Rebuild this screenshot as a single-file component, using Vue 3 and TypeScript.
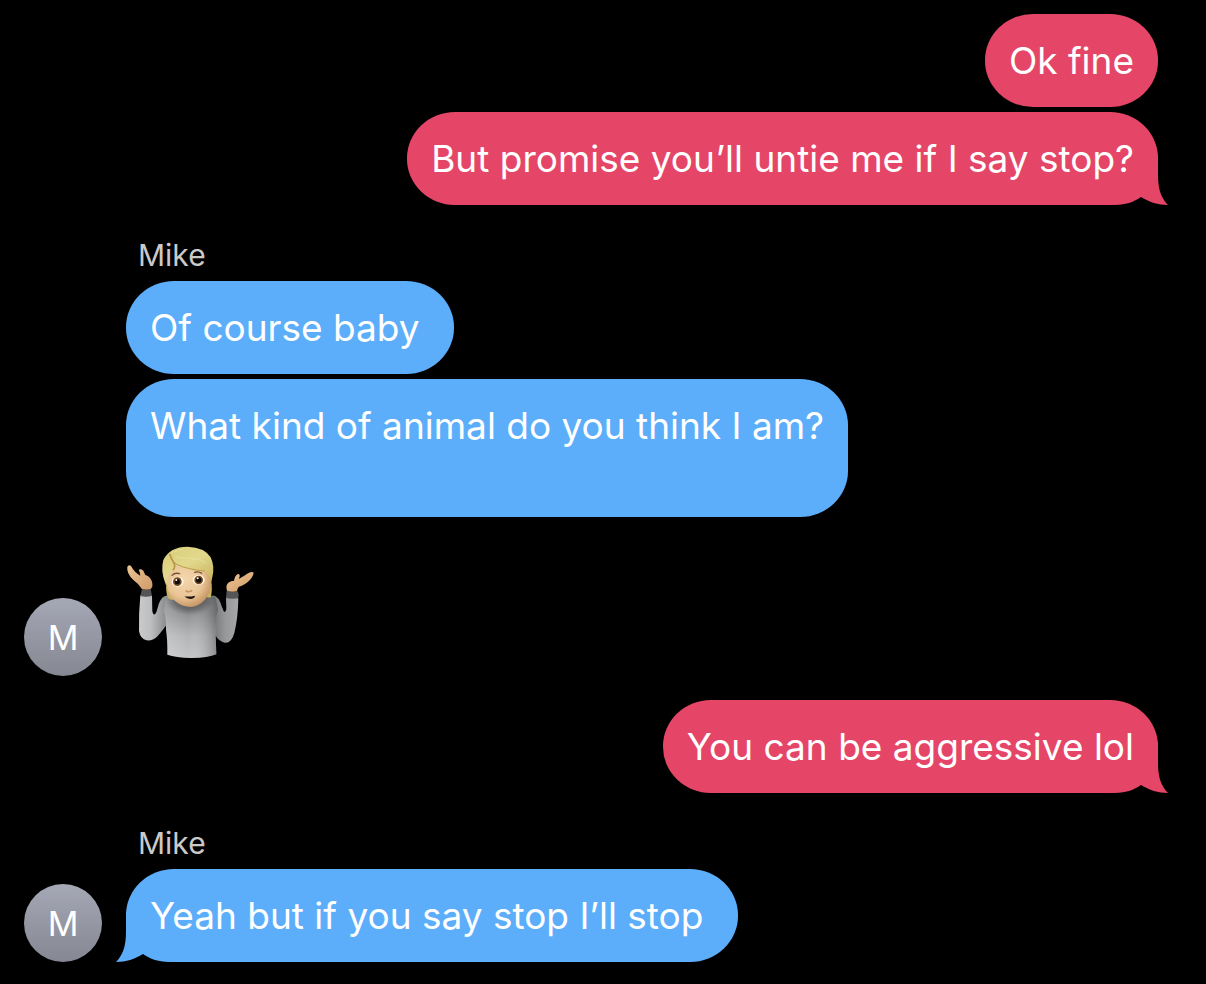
<script setup lang="ts">
interface Message {
  text?: string
  emoji?: boolean
  tail?: boolean
}

interface Group {
  sender: 'me' | 'Mike'
  messages: Message[]
}

const groups: Group[] = [
  {
    sender: 'me',
    messages: [{ text: 'Ok fine' }, { text: 'But promise you’ll untie me if I say stop?', tail: true }],
  },
  {
    sender: 'Mike',
    messages: [
      { text: 'Of course baby ' },
      { text: 'What kind of animal do you think I am?\n\n' },
      { emoji: true },
    ],
  },
  { sender: 'me', messages: [{ text: 'You can be aggressive lol', tail: true }] },
  { sender: 'Mike', messages: [{ text: 'Yeah but if you say stop I’ll stop ', tail: true }] },
]
</script>

<template>
  <main class="thread">
    <section
      v-for="(group, g) in groups"
      :key="g"
      class="group"
      :class="group.sender === 'me' ? 'sent' : 'received'"
    >
      <div v-if="group.sender !== 'me'" class="avatar" aria-hidden="true">M</div>
      <div class="stack">
        <h2 v-if="group.sender !== 'me'" class="name">{{ group.sender }}</h2>
        <template v-for="(message, m) in group.messages" :key="m">
          <svg
            v-if="message.emoji"
            class="shrug"
            viewBox="30 30 384 339"
            role="img"
            aria-label="Person shrugging"
          >
            <defs>
              <linearGradient id="torso" x1="0" y1="0" x2="0" y2="1">
                <stop offset="0" stop-color="#77787a" />
                <stop offset="0.3" stop-color="#8f9092" />
                <stop offset="0.65" stop-color="#b4b5b7" />
                <stop offset="1" stop-color="#c3c4c6" />
              </linearGradient>
              <linearGradient id="torsoShade" x1="0" y1="0" x2="1" y2="0">
                <stop offset="0" stop-color="#ffffff" stop-opacity="0.22" />
                <stop offset="0.45" stop-color="#ffffff" stop-opacity="0" />
                <stop offset="1" stop-color="#303032" stop-opacity="0.42" />
              </linearGradient>
              <linearGradient id="leftSleeve" x1="0" y1="0" x2="1" y2="0">
                <stop offset="0" stop-color="#c9cacc" />
                <stop offset="0.4" stop-color="#bdbec0" />
                <stop offset="1" stop-color="#828385" />
              </linearGradient>
              <linearGradient id="rightSleeve" x1="0" y1="0" x2="1" y2="0">
                <stop offset="0" stop-color="#6c6d6f" />
                <stop offset="0.55" stop-color="#97989a" />
                <stop offset="1" stop-color="#a7a8aa" />
              </linearGradient>
              <radialGradient id="skin" cx="0.42" cy="0.4" r="0.66">
                <stop offset="0" stop-color="#f3d6ac" />
                <stop offset="0.6" stop-color="#eac596" />
                <stop offset="1" stop-color="#c08c5a" />
              </radialGradient>
              <linearGradient id="hand" x1="0" y1="0" x2="1" y2="1">
                <stop offset="0" stop-color="#edc696" />
                <stop offset="1" stop-color="#d09a67" />
              </linearGradient>
              <linearGradient id="hair" x1="0" y1="0" x2="0.8" y2="1">
                <stop offset="0" stop-color="#d8cc76" />
                <stop offset="0.5" stop-color="#e2d88c" />
                <stop offset="1" stop-color="#c9b45e" />
              </linearGradient>
              <radialGradient id="neckShadow">
                <stop offset="0" stop-color="#333335" stop-opacity="0.85" />
                <stop offset="0.65" stop-color="#4b4b4d" stop-opacity="0.5" />
                <stop offset="1" stop-color="#555557" stop-opacity="0" />
              </radialGradient>
            </defs>
            <path
              fill="url(#leftSleeve)"
              d="M73 178 Q90 171 108 179 L109 226 Q113 244 121 229 L129 202 Q137 180 153 179 L158 258 Q145 277 126 299 Q112 315 92 313 Q73 309 69 285 Q68 229 73 178Z"
            />
            <path
              fill="url(#rightSleeve)"
              d="M290 178 Q309 181 317 211 L323 226 Q328 233 331 219 L330 186 Q350 181 367 187 Q366 247 355 291 Q346 323 326 320 Q310 318 295 294 L281 260Z"
            />
            <path
              fill="url(#torso)"
              d="M149 180 Q177 173 205 177 H260 Q284 176 298 184 L306 221 Q298 249 299 295 L301 355 Q276 366 226 366 Q179 365 154 356 Q155 313 150 281 Q151 247 144 226Z"
            />
            <path
              fill="url(#torsoShade)"
              d="M149 180 Q177 173 205 177 H260 Q284 176 298 184 L306 221 Q298 249 299 295 L301 355 Q276 366 226 366 Q179 365 154 356 Q155 313 150 281 Q151 247 144 226Z"
            />
            <ellipse cx="222" cy="190" rx="74" ry="48" fill="url(#neckShadow)" />
            <path fill="#555557" d="M78 158 Q89 165 104 159 L108 180 Q89 185 73 180Z" />
            <path fill="#555557" d="M332 164 Q348 170 364 165 Q371 175 366 187 Q347 190 330 186Z" />
            <path
              fill="url(#hand)"
              d="M77 158 Q70 145 52 132 Q31 112 34 93 Q37 84 45 90 Q55 109 73 119 Q71 105 68 101 Q75 97 82 104 L88 117 Q101 121 107 134 Q113 150 104 159 Q91 164 77 158Z"
            />
            <path
              fill="url(#hand)"
              d="M333 164 Q328 148 337 140 Q345 134 354 134 Q357 119 364 115 Q373 112 371 122 L368 129 Q384 121 396 112 Q409 105 413 110 Q412 120 401 133 Q386 148 369 152 Q365 155 363 165 Q348 170 333 164Z"
            />
            <path d="M150 150 Q151 183 159 188 Q168 193 180 191 L176 160Z" fill="#c9b45e" />
            <path d="M265 175 Q276 190 285 182 Q289 165 287 140Z" fill="#c9b45e" />
            <path
              fill="url(#skin)"
              d="M150 128 Q155 84 184 72 H262 Q282 88 286 128 Q287 166 268 190 Q248 213 222 213 Q192 212 168 187 Q153 169 150 128Z"
            />
            <path
              fill="url(#hair)"
              d="M148 142 Q133 104 142 72 Q161 32 215 32 Q266 34 284 64 Q297 92 289 124 Q286 131 286 142 Q281 117 266 106 Q240 104 215 98 Q186 90 174 83 Q177 93 174 99 Q158 109 154 128 L152 153Z"
            />
            <path
              d="M161 55 Q166 74 180 84 Q199 94 221 98 Q244 104 266 105"
              fill="none"
              stroke="#b99d4d"
              stroke-width="3"
            />
            <path
              d="M162 56 Q166 69 172 78 Q180 91 172 101"
              fill="none"
              stroke="#b99548"
              stroke-width="5"
              stroke-linecap="round"
            />
            <path
              d="M166 51 Q178 43 202 40 M178 62 Q204 68 235 68 Q255 70 269 82"
              fill="none"
              stroke="#f0eab2"
              stroke-width="4"
              opacity="0.35"
            />
            <path
              d="M168 118 Q176 109 191 113 M236 109 Q248 105 257 112"
              fill="none"
              stroke="#755231"
              stroke-width="4"
              stroke-linecap="round"
            />
            <ellipse cx="185" cy="137" rx="18" ry="15" fill="#fff8e9" />
            <ellipse cx="248" cy="132" rx="18" ry="15" fill="#fff8e9" />
            <circle cx="184" cy="137" r="13" fill="#754a20" />
            <circle cx="248" cy="132" r="13" fill="#754a20" />
            <circle cx="184" cy="137" r="8" fill="#130c08" />
            <circle cx="248" cy="132" r="8" fill="#130c08" />
            <circle cx="181" cy="132" r="3" fill="#ffffff" />
            <circle cx="245" cy="127" r="3" fill="#ffffff" />
            <path
              d="M211 165 Q218 170 227 164"
              fill="none"
              stroke="#c9945f"
              stroke-width="5"
              stroke-linecap="round"
            />
            <path d="M205 181 Q221 183 237 179 Q237 188 222 189 Q210 188 205 181Z" fill="#21130f" />
          </svg>
          <p v-else class="bubble">
            <svg v-if="message.tail" class="tail" viewBox="0 0 56 50" aria-hidden="true">
              <path d="M0 0 H46 V19 C46 32 48 42 56 50 C46 50 37 47 29 42 C22 47 14 50 0 50Z" />
            </svg>
            <span class="text">{{ message.text }}</span>
          </p>
        </template>
      </div>
    </section>
  </main>
</template>

<style>
body {
  margin: 0;
  background: #000;
}
</style>

<style scoped>
.thread {
  display: flex;
  flex-direction: column;
  padding: 14px 48px 22px 24px;
  font-family: Inter, "Liberation Sans", sans-serif;
  color: #fff;
}

.group {
  display: flex;
  align-items: flex-end;
  gap: 24px;
}

.sent {
  justify-content: flex-end;
}

.received {
  margin-top: 32px;
}

.received + .sent {
  margin-top: 24px;
}

.stack {
  display: flex;
  flex-direction: column;
  align-items: flex-start;
  gap: 5px;
  min-width: 0;
}

.sent .stack {
  align-items: flex-end;
}

.name {
  margin: 0 12px 3px;
  font-size: 30px;
  line-height: 36px;
  font-weight: 400;
  color: #cacaca;
}

.bubble {
  position: relative;
  margin: 0;
  padding: 24px;
  border-radius: 48px / 46px;
  font-size: 37px;
  line-height: 45px;
  font-weight: 400;
}

.text {
  position: relative;
  display: block;
  white-space: pre-wrap;
}

.sent .bubble {
  background: #e54667;
}

.received .bubble {
  background: #5caefa;
}

.tail {
  position: absolute;
  right: -10px;
  bottom: 0;
  width: 56px;
  height: 50px;
  fill: #e54667;
}

.received .tail {
  right: auto;
  left: -10px;
  fill: #5caefa;
  transform: scaleX(-1);
}

.avatar {
  display: flex;
  flex: none;
  align-items: center;
  justify-content: center;
  width: 78px;
  height: 78px;
  border-radius: 50%;
  background: linear-gradient(#a5a8b5, #858792);
  font-size: 34px;
  font-weight: 400;
}

.shrug {
  width: 128px;
  height: 113px;
  margin: 24px 0 17px;
}
</style>
